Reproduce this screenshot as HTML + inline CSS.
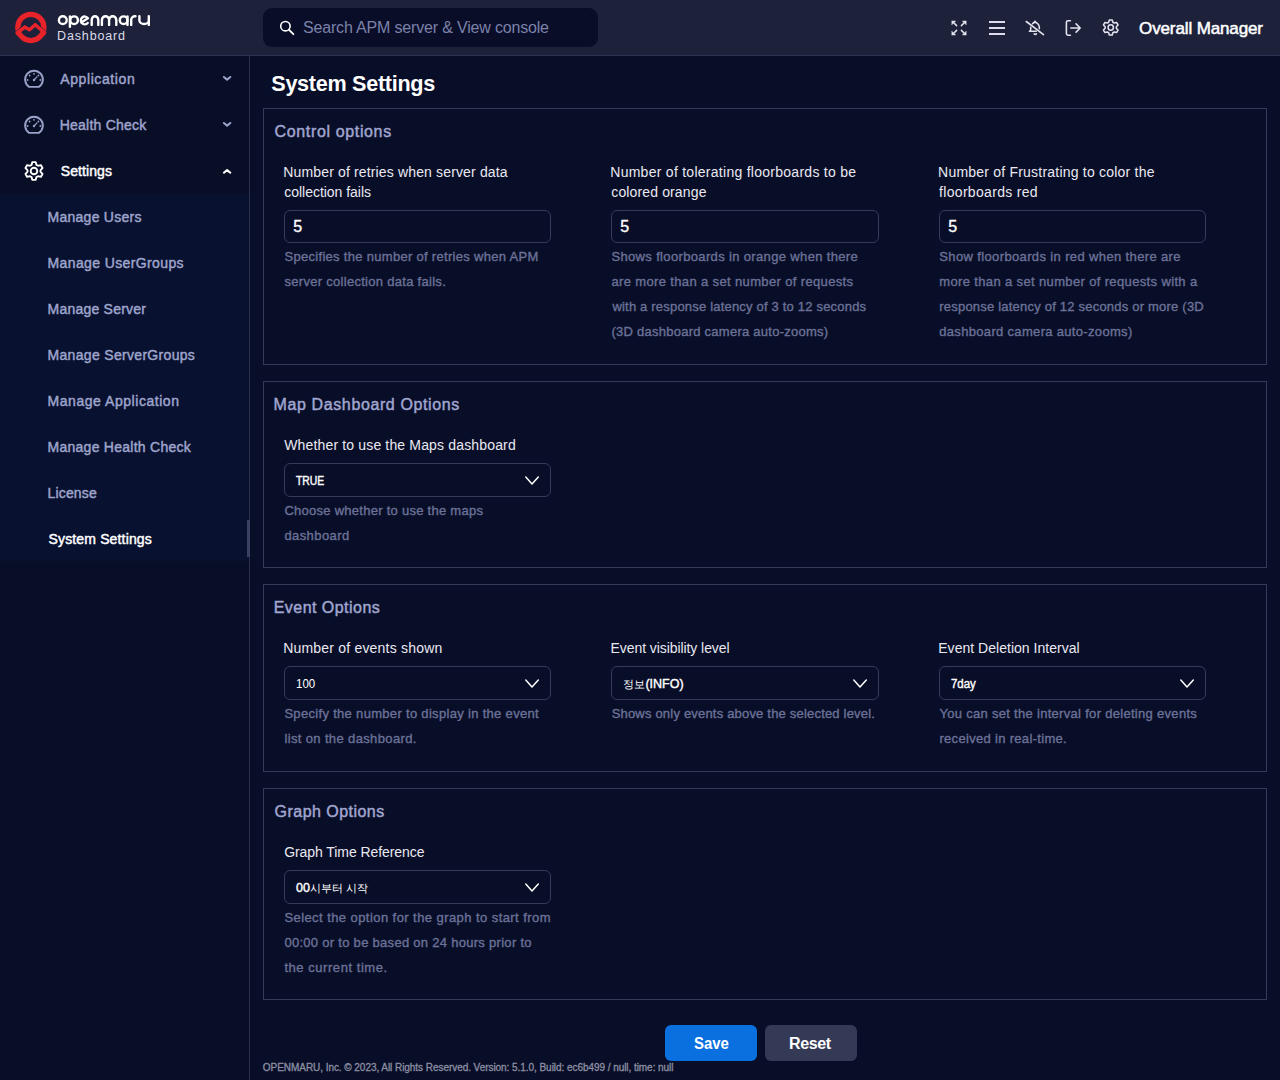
<!DOCTYPE html>
<html><head><meta charset="utf-8">
<style>
html,body{margin:0;padding:0;}
body{width:1280px;height:1080px;overflow:hidden;position:relative;background:#090e28;font-family:"Liberation Sans",sans-serif;}
.a{position:absolute;box-sizing:border-box;}
.t{position:absolute;white-space:pre;line-height:normal;font-family:"Liberation Sans",sans-serif;}
.box{position:absolute;box-sizing:border-box;border:1px solid #353a59;left:263px;width:1004px;}
.inp{position:absolute;box-sizing:border-box;border:1px solid #353a59;border-radius:6px;width:267px;height:33px;top:210px;}
.sel{position:absolute;box-sizing:border-box;border:1px solid #353a59;border-radius:6px;width:267px;height:34px;}
svg{position:absolute;overflow:visible;}
</style></head><body>
<!-- header -->
<div class="a" style="left:0;top:0;width:1280px;height:55px;background:#1d213a"></div>
<div class="a" style="left:0;top:55px;width:1280px;height:1px;background:#2d3252"></div>
<!-- sidebar -->
<div class="a" style="left:0;top:56px;width:249px;height:1024px;background:#090e27"></div>
<div class="a" style="left:0;top:193px;width:249px;height:369px;background:linear-gradient(#090e27 0px,#08112f 2.5px,#08112f 366.5px,#090e27 369px)"></div>
<div class="a" style="left:249px;top:56px;width:1px;height:1024px;background:#2a2f4a"></div>
<div class="a" style="left:247px;top:520px;width:3px;height:37px;background:#3a4062"></div>

<!-- logo -->
<svg style="left:0;top:0" width="160" height="56" viewBox="0 0 160 56">
  <defs><clipPath id="lc"><circle cx="30.85" cy="27.45" r="16.3"/></clipPath></defs>
  <circle cx="30.85" cy="27.45" r="13.1" fill="none" stroke="#e8232a" stroke-width="5.2"/>
  <g clip-path="url(#lc)">
  <path d="M13.6 33.2 L24.8 24.6 L29.5 27.2 L35.2 22.4 L48.5 33.6" fill="none" stroke="#1d213a" stroke-width="0.9"/>
  <path d="M13.8 35.6 L24.8 27.1 L29.5 29.7 L35.2 24.7 L48.3 35.9" fill="none" stroke="#e8232a" stroke-width="3.5" stroke-linejoin="miter"/>
  </g>
  <g fill="none" stroke="#ffffff" stroke-width="2.4" stroke-linecap="round" stroke-linejoin="round">
    <circle cx="62.8" cy="20.15" r="3.9"/>
    <circle cx="74.1" cy="20.15" r="3.8"/><path d="M69.9 16.4 V26.8"/>
    <path d="M87.7 23 A3.9 3.9 0 1 1 87.9 18.2 L81.3 22.6"/>
    <path d="M91.7 24.9 V20 A3.3 3.7 0 0 1 98.3 20 V24.9"/>
    <path d="M101.9 24.9 V20 A3.6 3.7 0 0 1 109.1 20 V24.9 M109.1 20 A3.6 3.7 0 0 1 116.3 20 V24.9"/>
    <circle cx="123.6" cy="20.15" r="3.8"/><path d="M127.5 16.4 V24.9"/>
    <path d="M131.2 24.9 V20 A3.7 3.7 0 0 1 135.5 16.3"/>
    <path d="M139.4 16.3 V20.15 A4.7 3.85 0 0 0 148.8 20.15 V16.3 V24.9"/>
  </g>
</svg>
<!-- search -->
<div class="a" style="left:263px;top:8px;width:335px;height:39px;border-radius:9px;background:#090d28"></div>
<svg style="left:0;top:0" width="1" height="1">
  <circle cx="285.4" cy="26.2" r="4.7" fill="none" stroke="#fff" stroke-width="1.6"/>
  <path d="M288.8 29.6 L293.4 34.2" stroke="#fff" stroke-width="1.8" stroke-linecap="round"/>
</svg>
<!-- header icons -->
<svg style="left:0;top:0" width="1" height="1">
  <g stroke="#e2e3ee" stroke-width="1.7" fill="#e2e3ee" stroke-linecap="round" stroke-linejoin="round">
    <!-- expand -->
    <path d="M953.5 22.5 L956.6 25.6 M964.5 22.5 L961.4 25.6 M953.5 33.5 L956.6 30.4 M964.5 33.5 L961.4 30.4" fill="none" stroke-width="1.5"/>
    <path d="M952 21 h3.6 l-3.6 3.6z M966 21 h-3.6 l3.6 3.6z M952 35 h3.6 l-3.6 -3.6z M966 35 h-3.6 l3.6 -3.6z" stroke-width="0.5"/>
  </g>
  <g fill="#dcdcec">
    <rect x="989" y="21" width="16" height="2"/>
    <rect x="989" y="27" width="16" height="2"/>
    <rect x="989" y="33" width="16" height="2"/>
  </g>
  <g fill="none" stroke="#e2e3ee" stroke-width="1.6" stroke-linecap="round" stroke-linejoin="round">
    <!-- bell off -->
    <path d="M1032.6 23.6 Q1033.6 22.6 1035 22.3 Q1038.8 23.3 1039.3 27 V28.8"/>
    <path d="M1034.3 21.9 L1035 21 L1035.7 21.9Z" stroke-width="1.2"/>
    <path d="M1030.7 27.2 V29.6 Q1030.5 31 1029.5 31.3 H1036.3"/>
    <path d="M1034.2 33.9 Q1035.3 34.9 1036.4 33.9"/>
    <path d="M1026.3 21.5 L1043.5 34.6"/>
    <!-- logout -->
    <path d="M1070.4 20.8 H1068 A1.6 1.6 0 0 0 1066.4 22.4 V33.6 A1.6 1.6 0 0 0 1068 35.2 H1070.4"/>
    <path d="M1070.8 28 H1079.9 M1076.1 23.9 L1080.2 28 L1076.1 32.1"/>
  </g>
  <!-- gear -->
  <g transform="translate(1102.2,18.95) scale(0.855)">
    <path d="M7.53 3.88 L8.28 1.17 L11.72 1.17 L12.47 3.88 L14.06 4.80 L16.79 4.10 L18.51 7.07 L16.54 9.08 L16.54 10.92 L18.51 12.93 L16.79 15.90 L14.06 15.20 L12.47 16.12 L11.72 18.83 L8.28 18.83 L7.53 16.12 L5.94 15.20 L3.21 15.90 L1.49 12.93 L3.46 10.92 L3.46 9.08 L1.49 7.07 L3.21 4.10 L5.94 4.80Z" fill="none" stroke="#e2e3ee" stroke-width="1.8" stroke-linejoin="round"/>
    <circle cx="10" cy="10" r="3.1" fill="none" stroke="#e2e3ee" stroke-width="1.8"/>
  </g>
</svg>

<!-- sidebar icons -->
<svg style="left:0;top:0" width="1" height="1">
  <g fill="none" stroke="#9ba1c8" stroke-width="1.9" stroke-linejoin="round">
    <path d="M29.1 86.9 H38.9 A8.85 8.85 0 1 0 29.1 86.9 Z"/>
    <path d="M29.1 132.9 H38.9 A8.85 8.85 0 1 0 29.1 132.9 Z"/>
  </g>
  <g fill="#9ba1c8">
    <circle cx="27.6" cy="80" r="0.9"/><circle cx="29.6" cy="75.5" r="0.9"/><circle cx="34" cy="73.8" r="0.9"/><circle cx="38.4" cy="75.5" r="0.9"/><circle cx="40.3" cy="80" r="0.9"/>
    <circle cx="34" cy="80" r="1.2"/>
    <circle cx="27.6" cy="126" r="0.9"/><circle cx="29.6" cy="121.5" r="0.9"/><circle cx="34" cy="119.8" r="0.9"/><circle cx="38.4" cy="121.5" r="0.9"/><circle cx="40.3" cy="126" r="0.9"/>
    <circle cx="34" cy="126" r="1.2"/>
  </g>
  <g stroke="#9ba1c8" stroke-width="1.3" stroke-linecap="round">
    <path d="M34 80 L37 76.9"/><path d="M34 126 L37 122.9"/>
  </g>
  <g transform="translate(24,161)">
    <path d="M7.53 3.88 L8.28 1.17 L11.72 1.17 L12.47 3.88 L14.06 4.80 L16.79 4.10 L18.51 7.07 L16.54 9.08 L16.54 10.92 L18.51 12.93 L16.79 15.90 L14.06 15.20 L12.47 16.12 L11.72 18.83 L8.28 18.83 L7.53 16.12 L5.94 15.20 L3.21 15.90 L1.49 12.93 L3.46 10.92 L3.46 9.08 L1.49 7.07 L3.21 4.10 L5.94 4.80Z" fill="none" stroke="#fff" stroke-width="1.9" stroke-linejoin="round"/>
    <circle cx="10" cy="10" r="3.3" fill="none" stroke="#fff" stroke-width="1.9"/>
  </g>
  <g fill="none" stroke-width="1.9" stroke-linecap="round" stroke-linejoin="round">
    <path d="M223.9 77 L227.1 79.6 L230.3 77" stroke="#9ba1c8" stroke-width="2.1"/>
    <path d="M223.9 123 L227.1 125.6 L230.3 123" stroke="#9ba1c8" stroke-width="2.1"/>
    <path d="M223.9 172.7 L227.1 170.1 L230.3 172.7" stroke="#fff" stroke-width="2.1"/>
  </g>
</svg>

<!-- boxes -->
<div class="box" style="top:108px;height:257px"></div>
<div class="box" style="top:381px;height:187px"></div>
<div class="box" style="top:584px;height:188px"></div>
<div class="box" style="top:788px;height:212px"></div>

<!-- inputs -->
<div class="inp" style="left:284px"></div>
<div class="inp" style="left:611px;width:268px"></div>
<div class="inp" style="left:939px"></div>
<!-- selects -->
<div class="sel" style="left:284px;top:463px"></div>
<div class="sel" style="left:284px;top:666px"></div>
<div class="sel" style="left:611px;top:666px;width:268px"></div>
<div class="sel" style="left:939px;top:666px"></div>
<div class="sel" style="left:284px;top:870px"></div>
<svg style="left:0;top:0" width="1" height="1">
  <g fill="none" stroke="#fff" stroke-width="1.5" stroke-linecap="round" stroke-linejoin="round">
    <path d="M525.8 477 L532.0 484 L538.3 477"/>
    <path d="M525.8 680 L532.0 687 L538.3 680"/>
    <path d="M853.8 680 L860.0 687 L866.3 680"/>
    <path d="M1180.8 680 L1187.0 687 L1193.3 680"/>
    <path d="M525.8 884 L532.0 891 L538.3 884"/>
    </g>
</svg>

<!-- buttons -->
<div class="a" style="left:665px;top:1025px;width:92px;height:36px;border-radius:6px;background:#0a6fdf"></div>
<div class="a" style="left:765px;top:1025px;width:92px;height:36px;border-radius:6px;background:#343a55"></div>

<div class="t" style="left:57.10px;top:29.00px;font-size:12.5px;font-weight:400;color:#dcdde8;letter-spacing:0.838px">Dashboard</div>
<div class="t" style="left:303.00px;top:19.00px;font-size:16px;font-weight:400;color:#7c82aa;letter-spacing:-0.173px">Search APM server &amp; View console</div>
<div class="t" style="left:1139.05px;top:19.00px;font-size:17px;font-weight:400;color:#ffffff;-webkit-text-stroke:0.5px #ffffff;letter-spacing:-0.122px">Overall Manager</div>
<div class="t" style="left:60.23px;top:71.00px;font-size:14px;font-weight:400;color:#9ea4cc;-webkit-text-stroke:0.45px #9ea4cc;letter-spacing:0.605px">Application</div>
<div class="t" style="left:59.73px;top:117.00px;font-size:14px;font-weight:400;color:#9ea4cc;-webkit-text-stroke:0.45px #9ea4cc;letter-spacing:0.228px">Health Check</div>
<div class="t" style="left:60.73px;top:163.00px;font-size:14px;font-weight:400;color:#ffffff;-webkit-text-stroke:0.45px #ffffff;letter-spacing:0.095px">Settings</div>
<div class="t" style="left:47.52px;top:209.00px;font-size:14px;font-weight:400;color:#9ea4cc;-webkit-text-stroke:0.45px #9ea4cc;letter-spacing:0.264px">Manage Users</div>
<div class="t" style="left:47.52px;top:255.00px;font-size:14px;font-weight:400;color:#9ea4cc;-webkit-text-stroke:0.45px #9ea4cc;letter-spacing:0.381px">Manage UserGroups</div>
<div class="t" style="left:47.52px;top:301.00px;font-size:14px;font-weight:400;color:#9ea4cc;-webkit-text-stroke:0.45px #9ea4cc;letter-spacing:0.225px">Manage Server</div>
<div class="t" style="left:47.52px;top:347.00px;font-size:14px;font-weight:400;color:#9ea4cc;-webkit-text-stroke:0.45px #9ea4cc;letter-spacing:0.318px">Manage ServerGroups</div>
<div class="t" style="left:47.52px;top:393.00px;font-size:14px;font-weight:400;color:#9ea4cc;-webkit-text-stroke:0.45px #9ea4cc;letter-spacing:0.545px">Manage Application</div>
<div class="t" style="left:47.52px;top:439.00px;font-size:14px;font-weight:400;color:#9ea4cc;-webkit-text-stroke:0.45px #9ea4cc;letter-spacing:0.263px">Manage Health Check</div>
<div class="t" style="left:47.52px;top:485.00px;font-size:14px;font-weight:400;color:#9ea4cc;-webkit-text-stroke:0.45px #9ea4cc;letter-spacing:0.164px">License</div>
<div class="t" style="left:48.52px;top:531.00px;font-size:14px;font-weight:400;color:#ffffff;-webkit-text-stroke:0.45px #ffffff;letter-spacing:0.150px">System Settings</div>
<div class="t" style="left:271.30px;top:71.00px;font-size:21.6px;font-weight:700;color:#ffffff;letter-spacing:-0.293px">System Settings</div>
<div class="t" style="left:274.62px;top:123.00px;font-size:16px;font-weight:400;color:#a0a6d0;-webkit-text-stroke:0.45px #a0a6d0;letter-spacing:0.638px">Control options</div>
<div class="t" style="left:273.62px;top:396.00px;font-size:16px;font-weight:400;color:#a0a6d0;-webkit-text-stroke:0.45px #a0a6d0;letter-spacing:0.606px">Map Dashboard Options</div>
<div class="t" style="left:273.73px;top:599.00px;font-size:16px;font-weight:400;color:#a0a6d0;-webkit-text-stroke:0.45px #a0a6d0;letter-spacing:0.462px">Event Options</div>
<div class="t" style="left:274.62px;top:803.00px;font-size:16px;font-weight:400;color:#a0a6d0;-webkit-text-stroke:0.45px #a0a6d0;letter-spacing:0.458px">Graph Options</div>
<div class="t" style="left:283.30px;top:164.00px;font-size:14px;font-weight:400;color:#e9e9f1;letter-spacing:0.147px">Number of retries when server data</div>
<div class="t" style="left:284.30px;top:184.00px;font-size:14px;font-weight:400;color:#e9e9f1;letter-spacing:-0.030px">collection fails</div>
<div class="t" style="left:284.48px;top:248.90px;font-size:13px;font-weight:400;color:#6b7298;-webkit-text-stroke:0.35px #6b7298;letter-spacing:0.300px">Specifies the number of retries when APM</div>
<div class="t" style="left:284.48px;top:273.90px;font-size:13px;font-weight:400;color:#6b7298;-webkit-text-stroke:0.35px #6b7298;letter-spacing:0.289px">server collection data fails.</div>
<div class="t" style="left:610.25px;top:164.00px;font-size:14px;font-weight:400;color:#e9e9f1;letter-spacing:0.270px">Number of tolerating floorboards to be</div>
<div class="t" style="left:611.25px;top:184.00px;font-size:14px;font-weight:400;color:#e9e9f1;letter-spacing:0.137px">colored orange</div>
<div class="t" style="left:611.42px;top:248.90px;font-size:13px;font-weight:400;color:#6b7298;-webkit-text-stroke:0.35px #6b7298;letter-spacing:0.350px">Shows floorboards in orange when there</div>
<div class="t" style="left:611.42px;top:273.90px;font-size:13px;font-weight:400;color:#6b7298;-webkit-text-stroke:0.35px #6b7298;letter-spacing:0.360px">are more than a set number of requests</div>
<div class="t" style="left:612.42px;top:298.90px;font-size:13px;font-weight:400;color:#6b7298;-webkit-text-stroke:0.35px #6b7298;letter-spacing:0.194px">with a response latency of 3 to 12 seconds</div>
<div class="t" style="left:611.42px;top:323.90px;font-size:13px;font-weight:400;color:#6b7298;-webkit-text-stroke:0.35px #6b7298;letter-spacing:0.257px">(3D dashboard camera auto-zooms)</div>
<div class="t" style="left:938.10px;top:164.00px;font-size:14px;font-weight:400;color:#e9e9f1;letter-spacing:0.214px">Number of Frustrating to color the</div>
<div class="t" style="left:939.10px;top:184.00px;font-size:14px;font-weight:400;color:#e9e9f1;letter-spacing:0.309px">floorboards red</div>
<div class="t" style="left:939.27px;top:248.90px;font-size:13px;font-weight:400;color:#6b7298;-webkit-text-stroke:0.35px #6b7298;letter-spacing:0.369px">Show floorboards in red when there are</div>
<div class="t" style="left:939.27px;top:273.90px;font-size:13px;font-weight:400;color:#6b7298;-webkit-text-stroke:0.35px #6b7298;letter-spacing:0.359px">more than a set number of requests with a</div>
<div class="t" style="left:939.27px;top:298.90px;font-size:13px;font-weight:400;color:#6b7298;-webkit-text-stroke:0.35px #6b7298;letter-spacing:0.211px">response latency of 12 seconds or more (3D</div>
<div class="t" style="left:939.27px;top:323.90px;font-size:13px;font-weight:400;color:#6b7298;-webkit-text-stroke:0.35px #6b7298;letter-spacing:0.323px">dashboard camera auto-zooms)</div>
<div class="t" style="left:284.20px;top:437.00px;font-size:14px;font-weight:400;color:#e9e9f1;letter-spacing:0.157px">Whether to use the Maps dashboard</div>
<div class="t" style="left:284.38px;top:503.00px;font-size:13px;font-weight:400;color:#6b7298;-webkit-text-stroke:0.35px #6b7298;letter-spacing:0.268px">Choose whether to use the maps</div>
<div class="t" style="left:284.38px;top:528.00px;font-size:13px;font-weight:400;color:#6b7298;-webkit-text-stroke:0.35px #6b7298;letter-spacing:0.430px">dashboard</div>
<div class="t" style="left:283.20px;top:640.00px;font-size:14px;font-weight:400;color:#e9e9f1;letter-spacing:0.199px">Number of events shown</div>
<div class="t" style="left:284.38px;top:706.20px;font-size:13px;font-weight:400;color:#6b7298;-webkit-text-stroke:0.35px #6b7298;letter-spacing:0.315px">Specify the number to display in the event</div>
<div class="t" style="left:284.38px;top:731.20px;font-size:13px;font-weight:400;color:#6b7298;-webkit-text-stroke:0.35px #6b7298;letter-spacing:0.367px">list on the dashboard.</div>
<div class="t" style="left:610.50px;top:640.00px;font-size:14px;font-weight:400;color:#e9e9f1;letter-spacing:-0.071px">Event visibility level</div>
<div class="t" style="left:611.67px;top:706.20px;font-size:13px;font-weight:400;color:#6b7298;-webkit-text-stroke:0.35px #6b7298;letter-spacing:0.194px">Shows only events above the selected level.</div>
<div class="t" style="left:938.25px;top:640.00px;font-size:14px;font-weight:400;color:#e9e9f1;letter-spacing:0.023px">Event Deletion Interval</div>
<div class="t" style="left:939.42px;top:706.20px;font-size:13px;font-weight:400;color:#6b7298;-webkit-text-stroke:0.35px #6b7298;letter-spacing:0.300px">You can set the interval for deleting events</div>
<div class="t" style="left:939.42px;top:731.20px;font-size:13px;font-weight:400;color:#6b7298;-webkit-text-stroke:0.35px #6b7298;letter-spacing:0.315px">received in real-time.</div>
<div class="t" style="left:284.20px;top:844.00px;font-size:14px;font-weight:400;color:#e9e9f1;letter-spacing:-0.073px">Graph Time Reference</div>
<div class="t" style="left:284.38px;top:910.20px;font-size:13px;font-weight:400;color:#6b7298;-webkit-text-stroke:0.35px #6b7298;letter-spacing:0.431px">Select the option for the graph to start from</div>
<div class="t" style="left:284.38px;top:935.20px;font-size:13px;font-weight:400;color:#6b7298;-webkit-text-stroke:0.35px #6b7298;letter-spacing:0.289px">00:00 or to be based on 24 hours prior to</div>
<div class="t" style="left:284.38px;top:960.20px;font-size:13px;font-weight:400;color:#6b7298;-webkit-text-stroke:0.35px #6b7298;letter-spacing:0.552px">the current time.</div>
<div class="t" style="left:293.18px;top:217.60px;font-size:16px;font-weight:400;color:#ffffff;-webkit-text-stroke:0.35px #ffffff">5</div>
<div class="t" style="left:620.17px;top:217.60px;font-size:16px;font-weight:400;color:#ffffff;-webkit-text-stroke:0.35px #ffffff">5</div>
<div class="t" style="left:948.17px;top:217.60px;font-size:16px;font-weight:400;color:#ffffff;-webkit-text-stroke:0.35px #ffffff">5</div>
<div class="t" style="left:296.20px;top:474.00px;font-size:12.5px;font-weight:400;color:#ffffff;transform:scaleX(0.8311);transform-origin:0 0;-webkit-text-stroke:0.4px #ffffff">TRUE</div>
<div class="t" style="left:296.25px;top:677.00px;font-size:12.5px;font-weight:400;color:#ffffff;transform:scaleX(0.9209);transform-origin:0 0">100</div>
<div class="t" style="left:623.45px;top:677.00px;font-size:12.5px;font-weight:400;color:#ffffff;-webkit-text-stroke:0.4px #ffffff"><span style="font-size:11px;-webkit-text-stroke:0">정보</span>(INFO)</div>
<div class="t" style="left:951.45px;top:677.00px;font-size:12.5px;font-weight:400;color:#ffffff;transform:scaleX(0.9154);transform-origin:0 0;-webkit-text-stroke:0.4px #ffffff">7day</div>
<div class="t" style="left:296.00px;top:881.00px;font-size:12.5px;font-weight:400;color:#ffffff;-webkit-text-stroke:0.4px #ffffff">00<span style="font-size:11px;-webkit-text-stroke:0">시부터 시작</span></div>
<div class="t" style="left:693.80px;top:1034.70px;font-size:16px;font-weight:700;color:#ffffff;transform:scaleX(0.9314);transform-origin:0 0">Save</div>
<div class="t" style="left:789.00px;top:1034.70px;font-size:16px;font-weight:700;color:#ffffff;letter-spacing:-0.363px">Reset</div>
<div class="t" style="left:262.85px;top:1062.00px;font-size:10px;font-weight:400;color:#8c8fa3;-webkit-text-stroke:0.3px #8c8fa3;letter-spacing:-0.051px">OPENMARU, Inc. © 2023, All Rights Reserved. Version: 5.1.0, Build: ec6b499 / null, time: null</div>
</body></html>
